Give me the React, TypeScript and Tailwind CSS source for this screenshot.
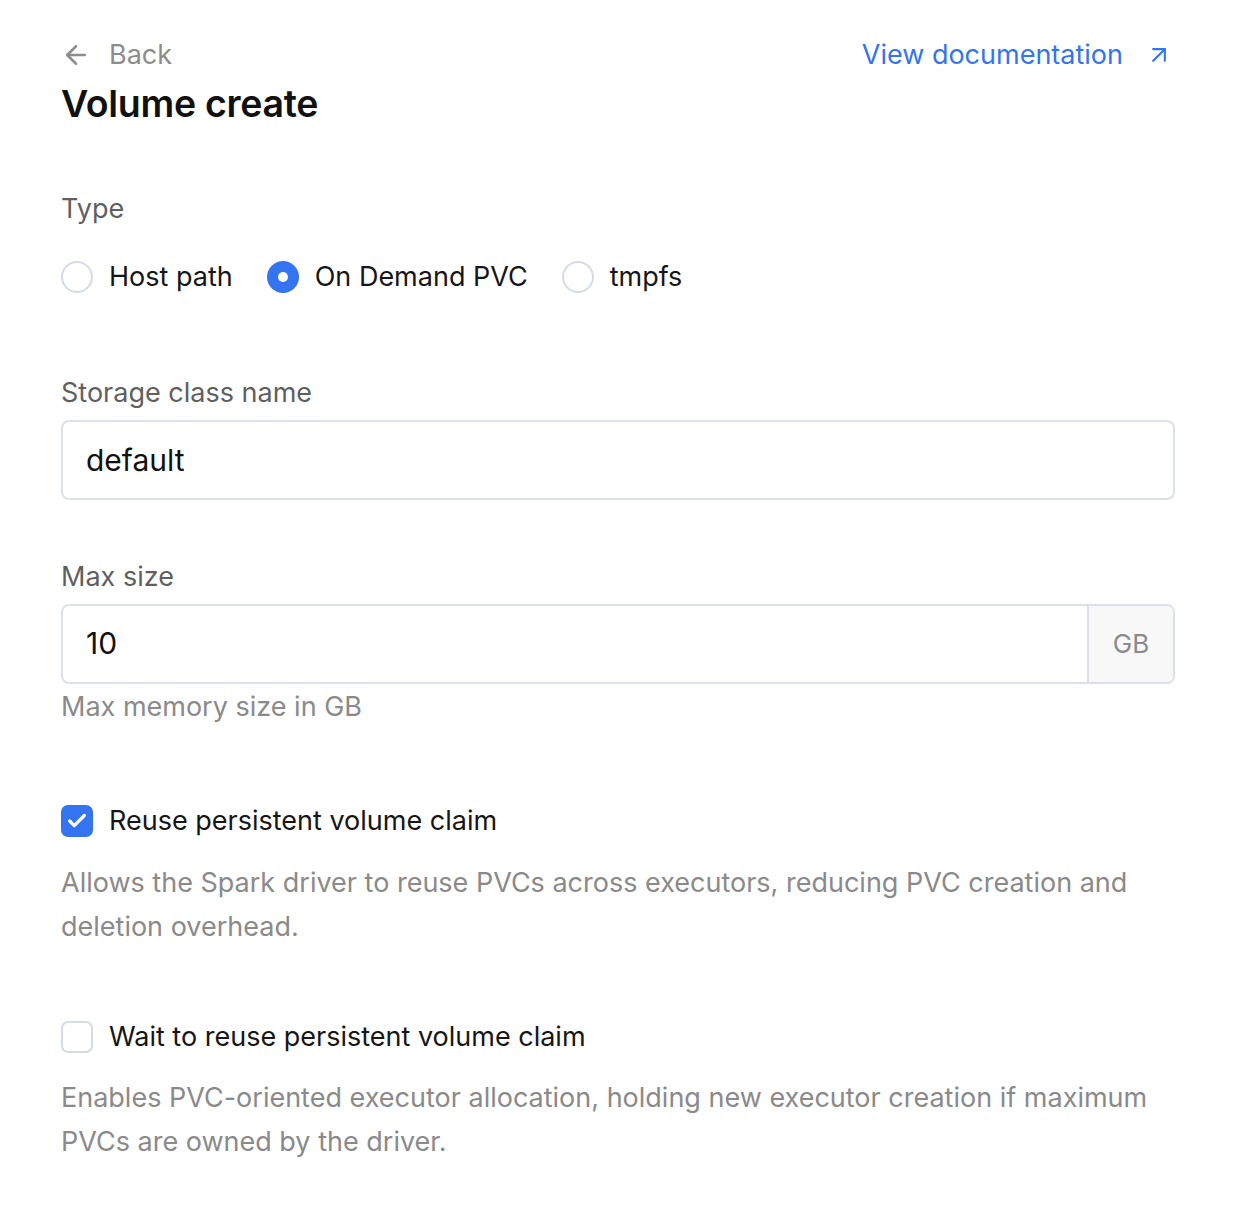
import { ArrowLeft, ArrowUpRight, Check } from "lucide-react";

function Radio({ label, checked }: { label: string; checked?: boolean }) {
  return (
    <label className="flex items-center gap-[16px]">
      {checked ? (
        <span className="flex h-[32px] w-[32px] items-center justify-center rounded-full bg-[#3574f0]">
          <span className="h-[10px] w-[10px] rounded-full bg-white" />
        </span>
      ) : (
        <span className="h-[32px] w-[32px] rounded-full border-2 border-[#d5dbe4] bg-white" />
      )}
      <span className="text-[27px] text-[#161616]">{label}</span>
    </label>
  );
}

function CheckRow({ label, checked, desc }: { label: string; checked?: boolean; desc: string }) {
  return (
    <div>
      <div className="flex items-center gap-[16px]">
        {checked ? (
          <span className="flex h-[32px] w-[32px] items-center justify-center rounded-[7px] bg-[#3574f0]">
            <Check className="h-[22px] w-[22px] text-white" strokeWidth={3.5} />
          </span>
        ) : (
          <span className="h-[32px] w-[32px] rounded-[7px] border-2 border-[#d5dbe4] bg-white" />
        )}
        <span className="text-[27px] text-[#161616]">{label}</span>
      </div>
      <p className="mt-[19px] text-[27px] leading-[44px] text-[#8a8a8a]">{desc}</p>
    </div>
  );
}

export default function App() {
  return (
    <div className="min-h-[1216px] bg-white pl-[61px] pr-[59px] pt-[35px] font-['Inter',sans-serif]">
      <div className="flex items-center justify-between">
        <div className="flex items-center gap-[18px] text-[27px] text-[#8c8c8c]">
          <ArrowLeft className="h-[30px] w-[30px]" strokeWidth={2} />
          <span>Back</span>
        </div>
        <a className="flex items-center gap-[22px] pr-[2px] text-[27px] text-[#3574f0]">
          <span>View documentation</span>
          <ArrowUpRight className="h-[28px] w-[28px]" strokeWidth={1.8} />
        </a>
      </div>
      <h1 className="mt-[3px] text-[37.5px] font-semibold leading-[50px] text-[#111] tracking-[-0.3px]">
        Volume create
      </h1>

      <div className="mt-[60px]">
        <div className="text-[27px] text-[#5f5f5f]">Type</div>
        <div className="mt-[28px] flex items-center gap-[34px]">
          <Radio label="Host path" />
          <Radio label="On Demand PVC" checked />
          <Radio label="tmpfs" />
        </div>
      </div>

      <div className="mt-[75px]">
        <div className="text-[27px] text-[#5f5f5f]">Storage class name</div>
        <div className="mt-[7px] flex h-[80px] items-center rounded-[8px] border-2 border-[#dde1e7] px-[23px] text-[30px] text-[#111]">
          default
        </div>
      </div>

      <div className="mt-[57px]">
        <div className="text-[27px] text-[#5f5f5f]">Max size</div>
        <div className="mt-[6px] flex h-[80px] overflow-hidden rounded-[8px] border-2 border-[#dde1e7]">
          <div className="flex flex-1 items-center px-[23px] text-[30px] text-[#111]">10</div>
          <div className="flex w-[86px] items-center justify-center border-l-2 border-[#dde1e7] bg-[#f8f8f9] text-[26px] text-[#8a8a8a]">
            GB
          </div>
        </div>
        <div className="mt-[3px] text-[27px] text-[#8a8a8a]">Max memory size in GB</div>
      </div>

      <div className="mt-[74px]">
        <CheckRow
          checked
          label="Reuse persistent volume claim"
          desc="Allows the Spark driver to reuse PVCs across executors, reducing PVC creation and deletion overhead."
        />
      </div>

      <div className="mt-[68px]">
        <CheckRow
          label="Wait to reuse persistent volume claim"
          desc="Enables PVC-oriented executor allocation, holding new executor creation if maximum PVCs are owned by the driver."
        />
      </div>
    </div>
  );
}
